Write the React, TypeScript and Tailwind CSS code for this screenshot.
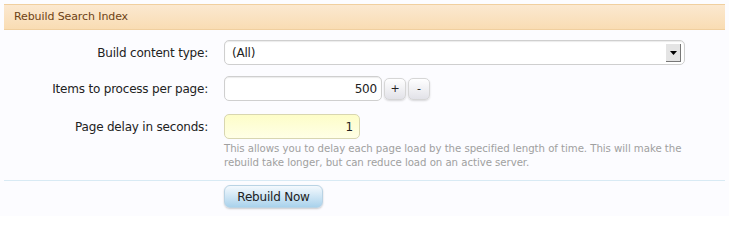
import {useState} from 'react'

export default function App() {
  const [type, setType] = useState('(All)')
  const [perPage, setPerPage] = useState(500)
  const [delay, setDelay] = useState('1')

  return (
    <div className="h-[216px] w-[729px] bg-[#fcfcff] p-1 font-['DejaVu_Sans',sans-serif] text-[12px] tracking-[-0.2px] text-[#222]">
      {/* Title bar */}
      <div className="flex h-[26px] items-center border-y border-[#f0cf9f] bg-gradient-to-b from-[#fbe8d0] to-[#f9dcb3] pl-[10px] text-[11px] tracking-[-0.1px] text-[#6e4215]">
        Rebuild Search Index
      </div>

      <div className="flex flex-col">
        <Row label="Build content type:" className="mt-[10px]">
          <div className="relative flex h-[25px] w-[461px] items-center rounded-[5px] border border-[#cfcfcf] bg-white pl-[7px] shadow-[inset_0_1px_1px_rgba(0,0,0,0.08)]">
            <span>{type}</span>
            <button
              className="absolute top-[3px] right-[3px] flex h-[18px] w-[15px] items-center justify-center border-r border-b border-[#777] border-t-white border-l-white bg-[#e4e4e4]"
              onClick={() => setType('(All)')}
              aria-label="Open"
            >
              <svg width="7" height="4" viewBox="0 0 7 4">
                <path d="M0 0h7L3.5 4z" fill="#000" />
              </svg>
            </button>
          </div>
        </Row>

        <Row label="Items to process per page:" className="mt-[11px]">
          <div className="flex items-center gap-[2px]">
            <div className="flex h-[25px] w-[158px] items-center justify-end rounded-[5px] border border-[#cfcfcf] bg-white pr-[4px] shadow-[inset_0_1px_1px_rgba(0,0,0,0.08)]">
              {perPage}
            </div>
            <SpinButton label="+" onClick={() => setPerPage(perPage + 1)} />
            <SpinButton label="-" onClick={() => setPerPage(Math.max(1, perPage - 1))} />
          </div>
        </Row>

        <Row label="Page delay in seconds:" className="mt-[13px]">
          <input
            value={delay}
            onChange={(e) => setDelay(e.target.value)}
            className="h-[25px] w-[136px] rounded-[5px] border border-[#d8d6b0] bg-gradient-to-b from-[#fdfdc8] to-[#ffffe6] pr-[6px] text-right outline-none"
          />
        </Row>

        <p className="mt-[3px] ml-[220px] w-[482px] text-[10.2px] leading-[14px] tracking-[-0.05px] text-[#a0a0a0]">
          This allows you to delay each page load by the specified length of time. This will make the rebuild take
          longer, but can reduce load on an active server.
        </p>

        <div className="mt-[10px] border-t border-[#d8eaf4]" />

        <div className="mt-[4px] ml-[220px]">
          <button className="h-[23px] w-[99px] rounded-[6px] border border-[#b9d3e4] bg-gradient-to-b from-[#f4f9fd] to-[#a9d2ec] text-[12px] text-[#222] shadow-[0_1px_2px_rgba(0,0,0,0.2)]">
            Rebuild Now
          </button>
        </div>
      </div>
    </div>
  )
}

function Row({label, className, children}: {label: string; className?: string; children: React.ReactNode}) {
  return (
    <div className={`flex items-center ${className ?? ''}`}>
      <label className="w-[204px] shrink-0 text-right">{label}</label>
      <div className="ml-4">{children}</div>
    </div>
  )
}

function SpinButton({label, onClick}: {label: string; onClick: () => void}) {
  return (
    <button
      className="h-[22px] w-[22px] rounded-[5px] border border-[#d6d6d6] bg-gradient-to-b from-white to-[#e2e2e8] text-[11px] leading-none text-[#222] shadow-[0_1px_2px_rgba(0,0,0,0.15)]"
      onClick={onClick}
    >
      {label}
    </button>
  )
}
